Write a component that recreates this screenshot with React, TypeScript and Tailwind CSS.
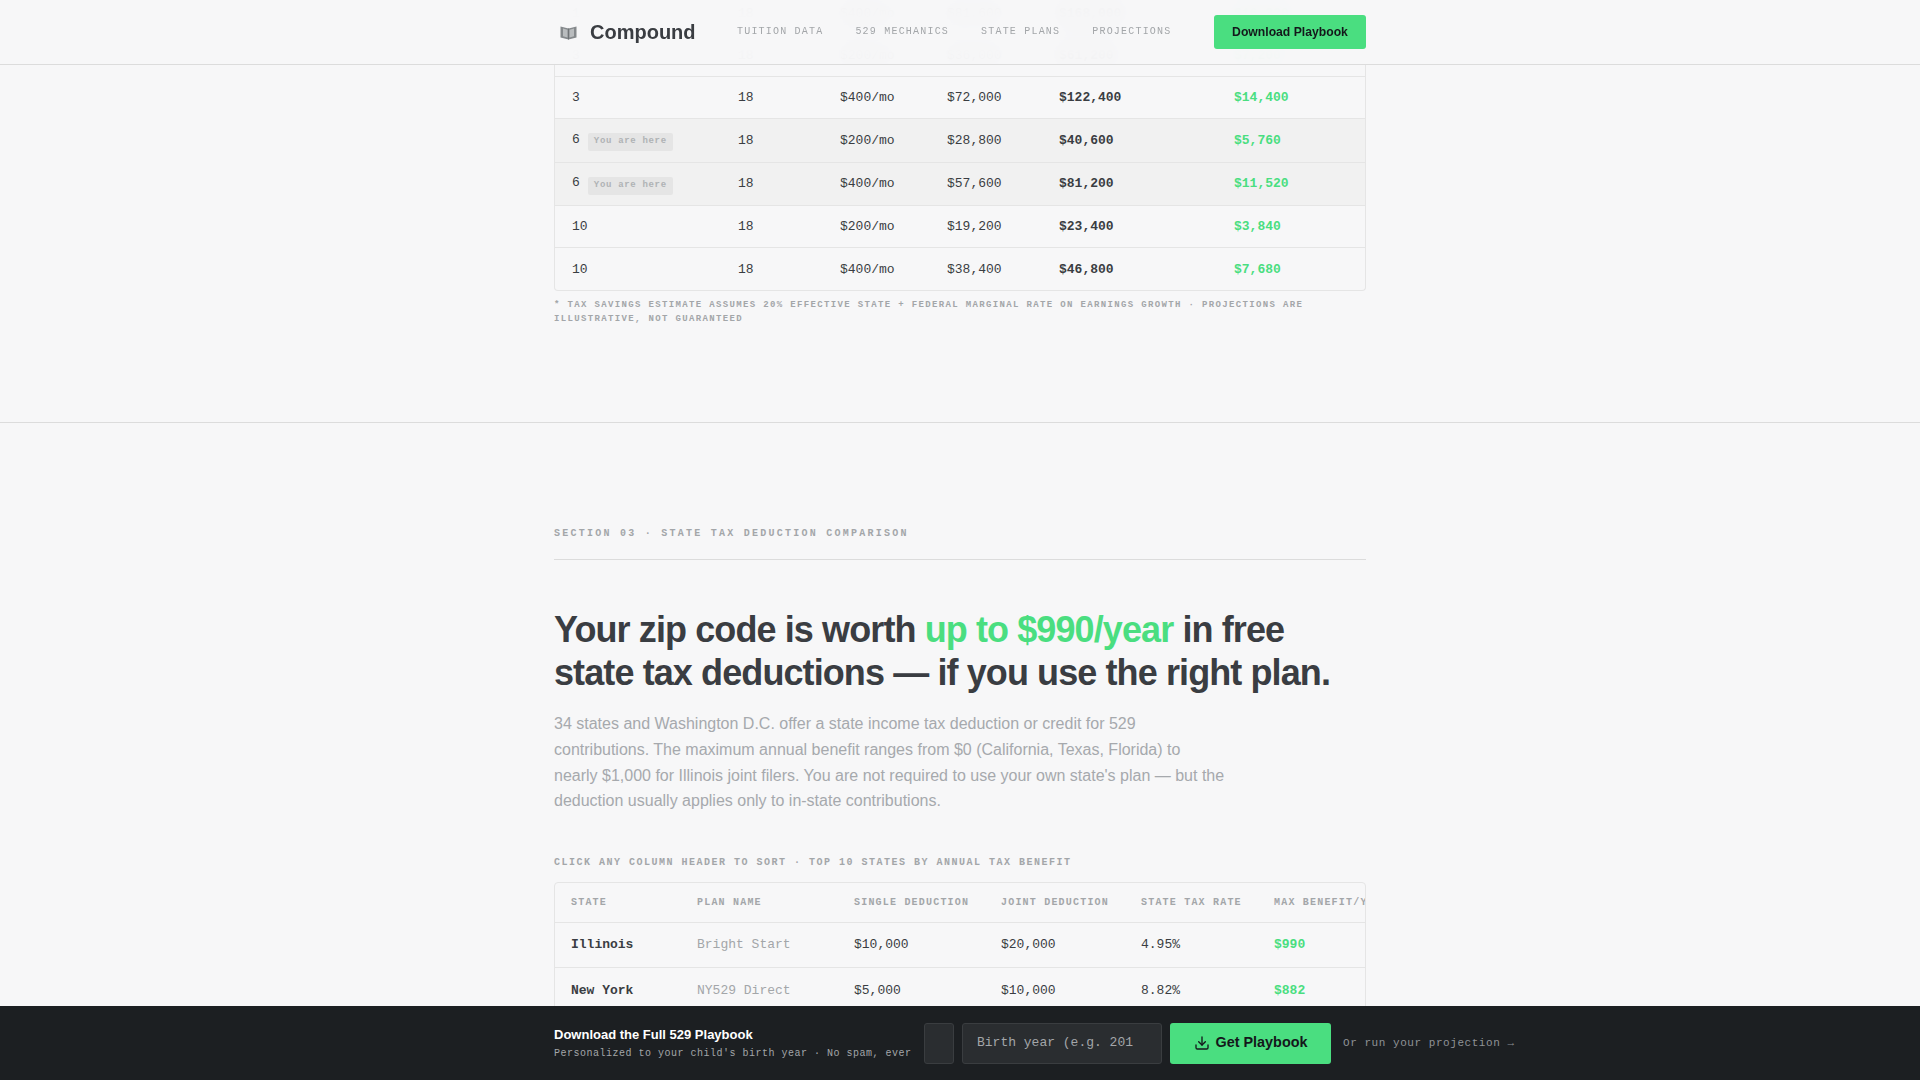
import { Download } from 'lucide-react';

const mono = "font-['Liberation_Mono',monospace]";

const topRows = [
  { age: '1', college: '18', amount: '$400/mo', total: '$81,600', value: '$168,000', tax: '$16,320', here: false },
  { age: '3', college: '18', amount: '$200/mo', total: '$36,000', value: '$61,200', tax: '$7,200', here: false },
  { age: '3', college: '18', amount: '$400/mo', total: '$72,000', value: '$122,400', tax: '$14,400', here: false },
  { age: '6', college: '18', amount: '$200/mo', total: '$28,800', value: '$40,600', tax: '$5,760', here: true },
  { age: '6', college: '18', amount: '$400/mo', total: '$57,600', value: '$81,200', tax: '$11,520', here: true },
  { age: '10', college: '18', amount: '$200/mo', total: '$19,200', value: '$23,400', tax: '$3,840', here: false },
  { age: '10', college: '18', amount: '$400/mo', total: '$38,400', value: '$46,800', tax: '$7,680', here: false },
];

const stateRows = [
  { state: 'Illinois', plan: 'Bright Start', single: '$10,000', joint: '$20,000', rate: '4.95%', max: '$990' },
  { state: 'New York', plan: 'NY529 Direct', single: '$5,000', joint: '$10,000', rate: '8.82%', max: '$882' },
];

function Logo() {
  return (
    <svg width="17" height="15" viewBox="0 0 17 15" className="shrink-0">
      <path d="M0.5 1.5 L8.5 3.5 L16.5 1.5 V12.5 L8.5 14.5 L0.5 12.5 Z" fill="#85898c" />
      <path d="M3 3.5 L7.5 4.8 V12.5 L3 11.2 Z M14 3.5 L9.5 4.8 V12.5 L14 11.2 Z" fill="#b9bcbe" />
      <path d="M8.5 3.5 V14.5" stroke="#6f7376" strokeWidth="1" fill="none" />
    </svg>
  );
}

export default function App() {
  return (
    <div className="relative h-[1080px] overflow-hidden bg-[#f7f7f8] font-['Liberation_Sans',sans-serif] text-[#3a3d42]">
      {/* Sticky nav over the scrolled page */}
      <header className="absolute inset-x-0 top-0 z-20 h-[65px] border-b border-[#dcdcdc] bg-[#f7f7f8]/95 backdrop-blur-md">
        <div className="mx-auto flex h-[64px] w-[812px] items-center">
          <div className="flex w-[183px] items-center gap-[13px] pl-[6px]">
            <Logo />
            <span className="text-xl font-bold text-[#3a3d42]">Compound</span>
          </div>
          <nav className={`${mono} flex gap-8 pb-[2px] text-[10px] tracking-[1.2px] text-[#a3a6a9]`}>
            <span>TUITION DATA</span>
            <span>529 MECHANICS</span>
            <span>STATE PLANS</span>
            <span>PROJECTIONS</span>
          </nav>
          <button className="ml-auto h-[34px] w-[152px] rounded-[3px] bg-[#4ade80] text-[12.2px] font-bold text-[#14181b]">
            Download Playbook
          </button>
        </div>
      </header>

      {/* Page content, scrolled part way down */}
      <main className="-mt-[7px]">
        <div className="mx-auto w-[812px]">
          <div className={`${mono} overflow-hidden rounded-b border-x border-b border-[#e5e5e5] text-[13px]`}>
            {topRows.map((r, i) => (
              <div
                key={i}
                className={`flex items-center border-b border-[#e5e5e5] last:border-b-0 last:pt-px ${r.here ? 'h-[43.5px] bg-[#f1f1f1]' : 'h-[42px]'}`}
              >
                <div className="flex w-[183px] items-center gap-2 pl-[17px]">
                  <span className={r.here ? 'mb-[2px]' : ''}>{r.age}</span>
                  {r.here && (
                    <span className="mt-[4px] rounded-[2px] bg-[#e5e5e5] px-[6px] pt-[2px] pb-[4px] text-[9px] leading-[12px] font-bold tracking-[0.68px] text-[#b0b3b5]">
                      You are here
                    </span>
                  )}
                </div>
                <div className="w-[102px]">{r.college}</div>
                <div className="w-[107px]">{r.amount}</div>
                <div className="w-[112px]">{r.total}</div>
                <div className="w-[175px] font-bold">{r.value}</div>
                <div className="font-bold text-[#4ade80]">{r.tax}</div>
              </div>
            ))}
          </div>
          <p className={`${mono} mt-[7px] text-[9px] leading-[14.4px] font-bold tracking-[1.35px] text-[#a3a6a9]`}>
            * TAX SAVINGS ESTIMATE ASSUMES 20% EFFECTIVE STATE + FEDERAL MARGINAL RATE ON EARNINGS GROWTH · PROJECTIONS ARE ILLUSTRATIVE, NOT GUARANTEED
          </p>
        </div>

        <div className="mt-[95px] border-t border-[#dcdcdc] pt-[103px]">
          <div className="mx-auto w-[812px]">
            <div className="border-b border-[#dcdcdc] pb-[18px]">
              <div className={`${mono} text-[10px] leading-[15px] font-bold tracking-[2.25px] text-[#a3a6a9]`}>
                SECTION 03 · STATE TAX DEDUCTION COMPARISON
              </div>
            </div>

            <h2 className="mt-[48px] text-[36px] leading-[43px] font-bold tracking-[-0.9px] text-[#3a3d42]">
              Your zip code is worth <span className="text-[#4ade80]">up to $990/year</span> in free state tax deductions — if you use the right plan.
            </h2>

            <p className="mt-[17.5px] w-[672px] text-base leading-[25.6px] text-[#a6a9ad]">
              34 states and Washington D.C. offer a state income tax deduction or credit for 529 contributions. The maximum annual benefit ranges from $0 (California, Texas, Florida) to nearly $1,000 for Illinois joint filers. You are not required to use your own state's plan — but the deduction usually applies only to in-state contributions.
            </p>

            <div className={`${mono} mt-[41.5px] text-[10px] leading-[15px] font-bold tracking-[1.5px] text-[#a3a6a9]`}>
              CLICK ANY COLUMN HEADER TO SORT · TOP 10 STATES BY ANNUAL TAX BENEFIT
            </div>

            <div className={`${mono} mt-[12px] overflow-hidden rounded border border-[#e5e5e5] text-[13px]`}>
              <div className="flex h-[39.5px] items-center border-b border-[#e5e5e5] text-[10px] font-bold tracking-[1.2px] whitespace-nowrap text-[#a3a6a9]">
                <div className="w-[142px] shrink-0 pl-4">STATE</div>
                <div className="w-[157px] shrink-0">PLAN NAME</div>
                <div className="w-[147px] shrink-0">SINGLE DEDUCTION</div>
                <div className="w-[140px] shrink-0">JOINT DEDUCTION</div>
                <div className="w-[133px] shrink-0">STATE TAX RATE</div>
                <div className="shrink-0">MAX BENEFIT/YR</div>
              </div>
              {stateRows.map((r) => (
                <div key={r.state} className="flex h-[45.5px] items-center border-b border-[#e5e5e5] whitespace-nowrap">
                  <div className="w-[142px] shrink-0 pl-4 font-bold">{r.state}</div>
                  <div className="w-[157px] shrink-0 text-[#a3a6a9]">{r.plan}</div>
                  <div className="w-[147px] shrink-0">{r.single}</div>
                  <div className="w-[140px] shrink-0">{r.joint}</div>
                  <div className="w-[133px] shrink-0">{r.rate}</div>
                  <div className="shrink-0 font-bold text-[#4ade80]">{r.max}</div>
                </div>
              ))}
            </div>
          </div>
        </div>
      </main>

      {/* Fixed download bar */}
      <footer className="absolute inset-x-0 bottom-0 z-20 h-[74px] bg-[#1c1f22]">
        <div className="ml-[554px] flex h-full items-center">
          <div className="w-[370px] shrink-0 pt-px">
            <div className="text-[13px] leading-[18px] font-bold text-white">Download the Full 529 Playbook</div>
            <div className={`${mono} mt-[1.5px] text-[10px] leading-[15px] tracking-[0.5px] text-[#a3a6a9]`}>
              Personalized to your child's birth year · No spam, ever
            </div>
          </div>
          <div className="h-[41px] w-[30px] shrink-0 rounded-[3px] border border-[#3a3d40] bg-[#2a2d30]" />
          <div className={`${mono} ml-2 flex h-[41px] w-[200px] shrink-0 items-center overflow-hidden rounded-[3px] border border-[#3a3d40] bg-[#2a2d30] pl-[14px] text-[13px] whitespace-nowrap text-[#a3a6a9]`}>
            Birth year (e.g. 201
          </div>
          <button className="ml-2 flex h-[41px] w-[161px] shrink-0 items-center justify-center gap-[6px] rounded-[3px] bg-[#4ade80] text-[14.4px] font-bold text-[#14181b]">
            <Download size={16} />
            Get Playbook
          </button>
          <div className={`${mono} ml-3 text-[11px] tracking-[0.55px] whitespace-nowrap text-[#8f9296]`}>
            Or run your projection →
          </div>
        </div>
      </footer>
    </div>
  );
}
